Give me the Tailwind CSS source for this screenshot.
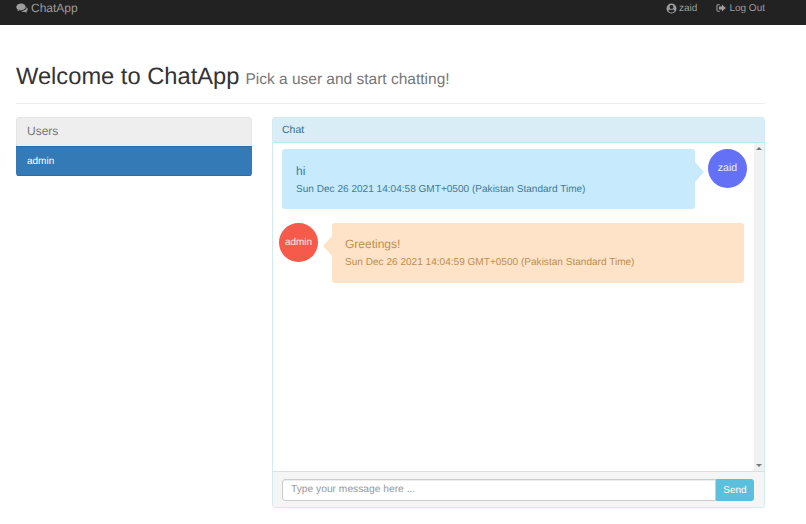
<!DOCTYPE html>
<html lang="en">
<head>
    <meta charset="UTF-8">
    <meta name="viewport" content="width=device-width, initial-scale=1.0">
    <script src="https://cdn.jsdelivr.net/npm/@tailwindcss/browser@4"></script>
    <title>ChatApp</title>
</head>
<body class="bg-white h-[524px] overflow-hidden font-['Liberation_Sans',Arial,sans-serif] text-[#333] [text-rendering:geometricPrecision]">

    <!-- navbar -->
    <nav class="h-[25px] bg-[#222] flex items-center justify-between pl-4 pr-[41px] pb-[9px] text-[#9d9d9d]">
        <div class="flex items-center gap-[3px] text-[12px]">
            <svg class="w-[12px] h-[11px]" viewBox="0 0 24 22" fill="currentColor"><path d="M10 1C4.800 1 .5 4.200.5 8c0 2.200 1.400 4.100 3.500 5.400-.3 1-.9 2-1.800 2.900 1.900-.2 3.600-.9 5-1.900.9.200 1.800.3 2.800.3 5.200 0 9.500-3.100 9.500-6.700S15.200 1 10 1z"/><path d="M21.300 8.200c.1.400.1.800-.1 1.200-.6 3.800-5.100 6.600-10.200 6.600h-.6c1.300 1.300 3.400 2.100 5.600 2.100.8 0 1.500-.1 2.200-.3 1.100.8 2.400 1.400 4 1.600-.7-.7-1.200-1.500-1.500-2.400 1.700-1 2.800-2.600 2.800-4.400 0-1.700-.9-3.300-2.200-4.400z"/></svg>
            <span>ChatApp</span>
        </div>
        <div class="flex items-center gap-[19px] text-[10px]">
            <div class="flex items-center gap-[2px]">
                <svg class="w-[11px] h-[11px]" viewBox="0 0 24 24" fill="currentColor"><path fill-rule="evenodd" d="M12 1a11 11 0 1 0 0 22 11 11 0 0 0 0-22zm0 3.500a4.300 4.300 0 1 1 0 8.600 4.300 4.300 0 0 1 0-8.600zM12 20.500c-2.800 0-5.200-1.300-6.700-3.300.3-1.800 1.500-3 3.200-3.200 1 .7 2.200 1.100 3.500 1.100s2.500-.4 3.500-1.100c1.700.2 2.900 1.400 3.200 3.200-1.500 2-3.900 3.300-6.700 3.300z"/></svg>
                <span>zaid</span>
            </div>
            <div class="flex items-center gap-[3px]">
                <svg class="w-[10px] h-[10px]" viewBox="0 0 24 24" fill="currentColor"><path d="M9 3H4.500A3.500 3.500 0 0 0 1 6.500v11A3.500 3.500 0 0 0 4.500 21H9v-2.500H4.500a1 1 0 0 1-1-1v-11a1 1 0 0 1 1-1H9V3z"/><path d="M14 3.500v5H7v7h7v5L23.500 12 14 3.500z"/></svg>
                <span>Log Out</span>
            </div>
        </div>
    </nav>

    <div class="pl-4 pr-[41px]">
        <!-- page header -->
        <div class="pt-[37px] pb-[10px] border-b border-[#eee] flex items-baseline gap-[6px]">
            <h1 class="text-[23.7px] leading-[31px] text-[#333]">Welcome to ChatApp</h1>
            <span class="text-[15.5px] text-[#777]">Pick a user and start chatting!</span>
        </div>

        <div class="mt-[13px] flex gap-[20px] items-start">
            <!-- users -->
            <div class="w-[236px] rounded-[3px] overflow-hidden">
                <div class="h-[29px] bg-[#eee] border border-b-0 border-[#e4e4e4] rounded-t-[3px] flex items-center px-[10px] pb-[3px] text-[12px] text-[#777]">Users</div>
                <div class="h-[30px] bg-[#337ab7] border-t border-b border-[#2e6da4] flex items-center px-[11px] text-[10px] text-white">admin</div>
            </div>

            <!-- chat -->
            <div class="w-[493px] h-[391px] rounded-[3px] border border-[#d2eaf2] flex flex-col overflow-hidden">
                <div class="h-[25px] shrink-0 bg-[#d9edf7] border-b border-[#bce8f1] flex items-center px-[9px] pt-[1px] text-[10.5px] text-[#31708f]">Chat</div>

                <div class="flex-1 flex min-h-0">
                    <div class="flex-1 pt-[6px] flex flex-col gap-[14px] min-w-0">
                        <div class="flex items-start">
                            <div class="relative ml-[9px] w-[413px] h-[60px] rounded-[3px] bg-[#c7eafd] px-[14px] pt-[14px] text-[#3f7c99]">
                                <div class="text-[12px] leading-[16px]">hi</div>
                                <div class="mt-[3px] text-[10.07px] leading-[16px]">Sun Dec 26 2021 14:04:58 GMT+0500 (Pakistan Standard Time)</div>
                                <div class="absolute right-[-9px] top-[13px] w-0 h-0 border-y-[10px] border-y-transparent border-l-[9px] border-l-[#c7eafd]"></div>
                            </div>
                            <div class="ml-[13px] w-[39px] h-[39px] pt-[1px] rounded-full bg-[#6470f5] flex items-center justify-center text-[10.5px] text-white/90">zaid</div>
                        </div>
                        <div class="flex items-start">
                            <div class="ml-[6px] w-[39px] h-[39px] rounded-full bg-[#f55a4b] flex items-center justify-center text-[10px] text-white/90">admin</div>
                            <div class="relative ml-[14px] w-[412px] h-[60px] rounded-[3px] bg-[#fee3c8] px-[13px] pt-[13px] text-[#bd8f4d]">
                                <div class="text-[12px] leading-[16px]">Greetings!</div>
                                <div class="mt-[3px] text-[10.07px] leading-[16px]">Sun Dec 26 2021 14:04:59 GMT+0500 (Pakistan Standard Time)</div>
                                <div class="absolute left-[-9px] top-[13px] w-0 h-0 border-y-[10px] border-y-transparent border-r-[9px] border-r-[#fee3c8]"></div>
                            </div>
                        </div>
                    </div>
                    <!-- scrollbar -->
                    <div class="w-[10px] shrink-0 bg-[#f1f1f1] flex flex-col items-center justify-between py-[4px]">
                        <div class="w-0 h-0 border-x-[3px] border-x-transparent border-b-[3px] border-b-[#777]"></div>
                        <div class="w-0 h-0 border-x-[3px] border-x-transparent border-t-[3px] border-t-[#777]"></div>
                    </div>
                </div>

                <div class="h-[36px] shrink-0 bg-[#f5f5f5] border-t border-[#ddd] pl-[9px] pr-[10px] pt-[7px]">
                    <div class="flex h-[22px]">
                        <div class="flex-1 bg-white border border-[#ccc] rounded-l-[3px] flex items-center px-[8px] text-[10.25px] text-[#999] shadow-[inset_0_1px_1px_rgba(0,0,0,0.075)]">Type your message here ...</div>
                        <div class="w-[38px] bg-[#5bc0de] rounded-r-[3px] flex items-center justify-center text-[10px] text-white">Send</div>
                    </div>
                </div>
            </div>
        </div>
    </div>

</body>
</html>
